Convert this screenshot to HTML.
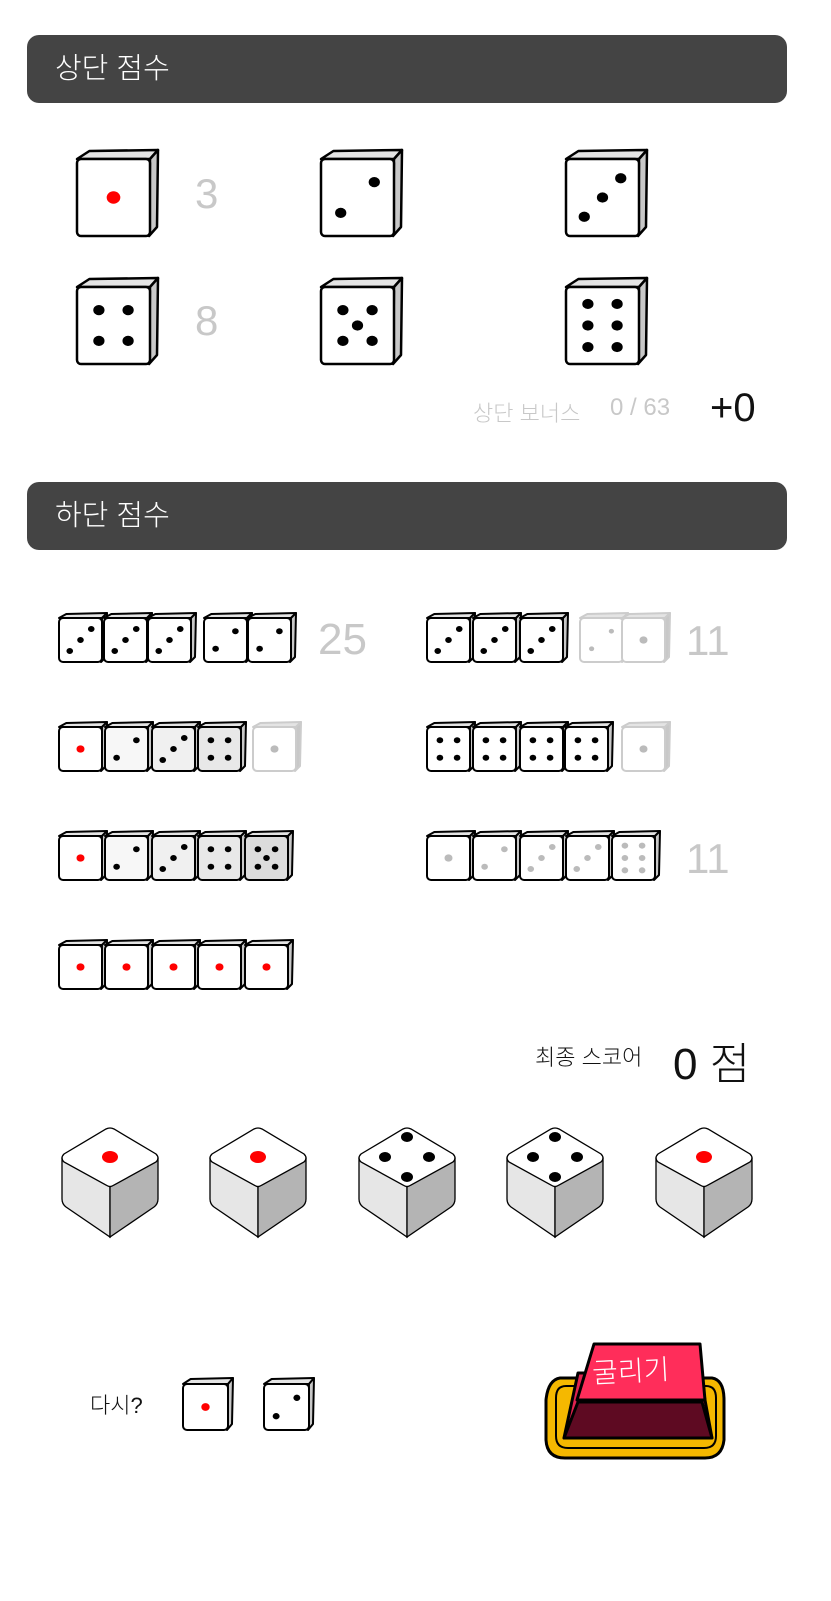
<!DOCTYPE html>
<html><head><meta charset="utf-8">
<style>
body{margin:0;width:831px;height:1601px;background:#fff;position:relative;overflow:hidden;font-family:"Liberation Sans","Noto Sans CJK KR",sans-serif;}
.bar{position:absolute;left:27px;width:760px;height:68px;background:#444;border-radius:12px;color:#fff;font-size:29px;line-height:68px;padding-left:28px;box-sizing:border-box;font-weight:300}
.t{position:absolute;white-space:nowrap;font-weight:300}
svg{position:absolute;left:0;top:0}
</style></head><body>
<div class="bar" style="top:35px">상단 점수</div>
<div class="bar" style="top:482px">하단 점수</div>
<div class="t" style="left:195px;top:170px;font-size:42px;color:#c8c8c8">3</div>
<div class="t" style="left:195px;top:297px;font-size:42px;color:#c8c8c8">8</div>
<div class="t" style="left:473px;top:396px;font-size:22px;color:#c8c8c8">상단 보너스</div>
<div class="t" style="left:610px;top:394px;font-size:24px;color:#c8c8c8">0 / 63</div>
<div class="t" style="left:710px;top:386px;font-size:40px;color:#111">+0</div>
<div class="t" style="left:318px;top:615px;font-size:44px;color:#c8c8c8">25</div>
<div class="t" style="left:686px;top:617px;font-size:42px;color:#c8c8c8">11</div>
<div class="t" style="left:686px;top:835px;font-size:42px;color:#c8c8c8">11</div>
<div class="t" style="left:535px;top:1040px;font-size:22px;color:#111">최종 스코어</div>
<div class="t" style="left:673px;top:1028px;font-size:44px;color:#111">0 점</div>
<div class="t" style="left:90px;top:1388px;font-size:22px;color:#111">다시?</div>
<svg id="s" width="831" height="1601" viewBox="0 0 831 1601"></svg>
<div class="t" style="left:592px;top:1350px;font-size:28px;color:#fff;transform:rotate(-3deg)">굴리기</div>
<script>
var out='';
var P={1:[[.5,.5]],2:[[.73,.3],[.27,.7]],3:[[.75,.25],[.5,.5],[.25,.75]],4:[[.3,.3],[.7,.3],[.3,.7],[.7,.7]],5:[[.3,.3],[.7,.3],[.5,.5],[.3,.7],[.7,.7]],6:[[.3,.22],[.7,.22],[.3,.5],[.7,.5],[.3,.78],[.7,.78]]};
function die(x,y,w,h,n,o){o=o||{};var st=o.f?'#ccc':'#000',pc=o.f?'#bbb':(n==1&&!o.g?'#f00':'#000');if(o.g)pc='#bbb';
var dt=Math.round(h*.12),sd=Math.round(w*.11),sw=o.sw||2;
out+='<polygon points="'+x+','+(y+dt)+' '+(x+w*.17)+','+(y+1)+' '+(x+w+sd)+','+y+' '+(x+w)+','+(y+dt)+'" fill="#e4e4e4" stroke="'+st+'" stroke-width="'+sw+'" stroke-linejoin="round"/>';
out+='<polygon points="'+(x+w)+','+(y+dt)+' '+(x+w+sd)+','+y+' '+(x+w+sd-1)+','+(y+h)+' '+(x+w-1)+','+(y+dt+h)+'" fill="#c8c8c8" stroke="'+st+'" stroke-width="'+sw+'" stroke-linejoin="round"/>';
out+='<rect x="'+x+'" y="'+(y+dt)+'" width="'+w+'" height="'+h+'" rx="4" fill="'+(o.bg||'#fff')+'" stroke="'+st+'" stroke-width="'+sw+'"/>';
var r=w*(o.f?.055:.07);if(n==1)r=w*.085;
P[n].forEach(function(p){out+='<ellipse cx="'+(x+p[0]*w)+'" cy="'+(y+dt+p[1]*h)+'" rx="'+r*1.1+'" ry="'+r+'" fill="'+pc+'"/>';});}
// upper
var ux=[77,321,566];
[[1,2,3],[4,5,6]].forEach(function(r,i){r.forEach(function(n,j){die(ux[j],150+i*128,73,77,n,{sw:2.5});});});
function row(xs,y,ns,os){xs.forEach(function(x,i){die(x,y,43,44,ns[i],os[i]);});}
row([59,104,148,204,248],613,[3,3,3,2,2],[{},{},{},{},{}]);
row([427,473,520,580,622],613,[3,3,3,2,1],[{},{},{},{f:1},{f:1}]);
row([59,105,152,198,253],722,[1,2,3,4,1],[{},{bg:'#f7f7f7'},{bg:'#f0f0f0'},{bg:'#e8e8e8'},{f:1}]);
row([427,473,520,565,622],722,[4,4,4,4,1],[{},{},{},{},{f:1}]);
row([59,105,152,198,245],831,[1,2,3,4,5],[{},{bg:'#f7f7f7'},{bg:'#f0f0f0'},{bg:'#e8e8e8'},{bg:'#dcdcdc'}]);
row([427,473,520,566,612],831,[1,2,3,3,6],[{g:1},{g:1},{g:1},{g:1},{g:1}]);
row([59,105,152,198,245],940,[1,1,1,1,1],[{},{},{},{},{}]);
die(183,1378,45,46,1,{});die(264,1378,45,46,2,{});
// iso dice
[[110,1],[258,1],[407,4],[555,4],[704,1]].forEach(function(d){var c=d[0],t=1127;
out+='<path d="M'+(c-48)+' '+(t+32)+' L'+c+' '+(t+60)+' L'+c+' '+(t+110)+' L'+(c-44)+' '+(t+80)+' Q'+(c-48)+' '+(t+77)+' '+(c-48)+' '+(t+72)+' Z" fill="#e6e6e6" stroke="#000" stroke-width="1.3"/>';
out+='<path d="M'+(c+48)+' '+(t+32)+' L'+c+' '+(t+60)+' L'+c+' '+(t+110)+' L'+(c+44)+' '+(t+80)+' Q'+(c+48)+' '+(t+77)+' '+(c+48)+' '+(t+72)+' Z" fill="#b4b4b4" stroke="#000" stroke-width="1.3"/>';
out+='<path d="M'+(c-4)+' '+(t+2)+' Q'+c+' '+t+' '+(c+4)+' '+(t+2)+' L'+(c+46)+' '+(t+27)+' Q'+(c+50)+' '+(t+31)+' '+(c+46)+' '+(t+35)+' L'+(c+4)+' '+(t+58)+' Q'+c+' '+(t+61)+' '+(c-4)+' '+(t+58)+' L'+(c-46)+' '+(t+35)+' Q'+(c-50)+' '+(t+31)+' '+(c-46)+' '+(t+27)+' Z" fill="#fff" stroke="#000" stroke-width="1.3"/>';
if(d[1]==1)out+='<ellipse cx="'+c+'" cy="'+(t+30)+'" rx="8" ry="6" fill="#f00"/>';
else [[0,10],[-22,30],[22,30],[0,50]].forEach(function(p){out+='<ellipse cx="'+(c+p[0])+'" cy="'+(t+p[1])+'" rx="6" ry="5" fill="#000"/>';});});
// button
out+='<path d="M560 1378 L712 1378 Q724 1380 724 1400 L724 1440 Q722 1458 705 1458 L565 1458 Q547 1458 546 1440 L546 1400 Q548 1380 560 1378 Z" fill="#f5b800" stroke="#000" stroke-width="3"/>';
out+='<path d="M556 1398 Q556 1386 566 1386 L706 1386 Q716 1386 716 1398 L716 1436 Q716 1448 704 1448 L568 1448 Q556 1448 556 1436 Z" fill="#f5b800" stroke="#000" stroke-width="2"/>';
out+='<path d="M578 1373 L700 1373 L712 1438 L564 1438 Z" fill="#e0224f" stroke="#000" stroke-width="3" stroke-linejoin="round"/>';
out+='<path d="M578 1402 L702 1402 L712 1438 L564 1438 Z" fill="#5e0a22" stroke="#000" stroke-width="3" stroke-linejoin="round"/>';
out+='<path d="M594 1344 L700 1344 L705 1400 L577 1400 Z" fill="#ff2d5a" stroke="#000" stroke-width="3" stroke-linejoin="round"/>';
document.getElementById('s').innerHTML=out;
</script>
</body></html>
